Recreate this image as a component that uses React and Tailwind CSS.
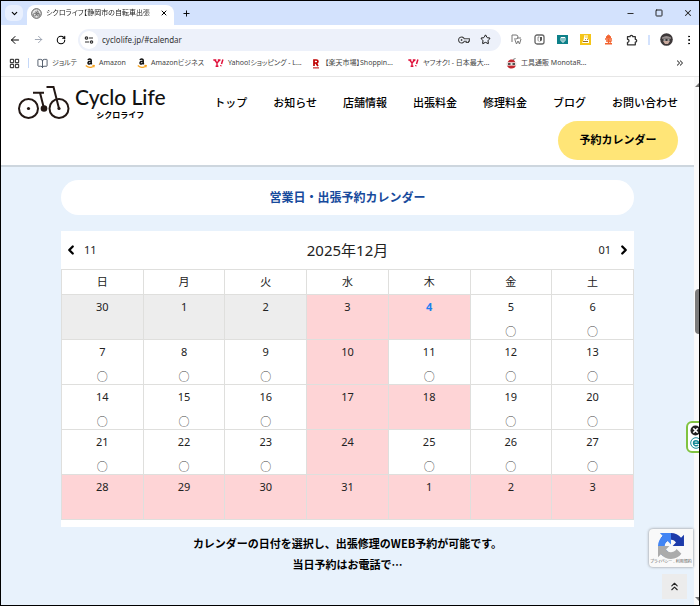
import {
  ArrowLeft, ArrowRight, BookOpen, ChevronDown, ChevronLeft, ChevronRight, ChevronsRight, ChevronsUp,
  LayoutGrid, Minus, MoreVertical, Plus, RotateCw, Square, Star, X,
} from 'lucide-react'

const navItems = ['トップ', 'お知らせ', '店舗情報', '出張料金', '修理料金', 'ブログ', 'お問い合わせ']

const bookmarks = [
  { label: 'ジョルテ', icon: <BookOpen size={11} strokeWidth={2} className="text-gray-600" />, width: 'w-[48px]' },
  { label: 'Amazon', icon: <AmazonIcon />, width: 'w-[52px]' },
  { label: 'Amazonビジネス', icon: <AmazonIcon />, width: 'w-[76px]' },
  { label: 'Yahoo!ショッピング - L...', icon: <YahooIcon />, width: 'w-[98px]' },
  { label: '【楽天市場】Shoppin...', icon: <RakutenIcon />, width: 'w-[97px]' },
  { label: 'ヤフオク! - 日本最大...', icon: <YahooIcon />, width: 'w-[98px]' },
  { label: '工具通販 MonotaR...', icon: <MonotaroIcon />, width: 'w-[92px]' },
]

const weekdays = ['日', '月', '火', '水', '木', '金', '土']

// state: 'past' | 'closed' | 'today' | 'open'
const weeks = [
  [[30, 'past'], [1, 'past'], [2, 'past'], [3, 'closed'], [4, 'today'], [5, 'open'], [6, 'open']],
  [[7, 'open'], [8, 'open'], [9, 'open'], [10, 'closed'], [11, 'open'], [12, 'open'], [13, 'open']],
  [[14, 'open'], [15, 'open'], [16, 'open'], [17, 'closed'], [18, 'closed'], [19, 'open'], [20, 'open']],
  [[21, 'open'], [22, 'open'], [23, 'open'], [24, 'closed'], [25, 'open'], [26, 'open'], [27, 'open']],
  [[28, 'closed'], [29, 'closed'], [30, 'closed'], [31, 'closed'], [1, 'closed'], [2, 'closed'], [3, 'closed']],
]

const cellStyles = {
  past: 'bg-[#ededed]',
  closed: 'bg-[#fed4d6]',
  today: 'bg-[#fed4d6] font-bold text-[#1c80f0]',
  open: 'bg-white',
}

function AmazonIcon() {
  return (
    <svg width="10" height="12" viewBox="0 0 10 12" aria-hidden="true">
      <path d="M3 3.2C3.3 1.8 6.2 1.5 6.2 3.4V6c0 .6.3.9.7 1.2M6.2 4.3C4.2 4.3 3 4.8 3 6c0 1.5 2.5 1.3 3.2-.3" fill="none" stroke="#111" strokeWidth="1.5" />
      <path d="M.8 8.6c2.3 2 5.500 2.200 8 .4M7.400 8.400l1.800.1-.5 1.700" fill="none" stroke="#f7a11a" strokeWidth="1.3" />
    </svg>
  )
}

function YahooIcon() {
  return (
    <svg width="11" height="10" viewBox="0 0 11 10" aria-hidden="true" fill="none" stroke="#e0103a">
      <path d="M.3 2h3M4.8 2h2.700M1.700 2l2.300 3M6.500 2.200L4 5v3.200M2.600 8.200h2.800" strokeWidth="1.4" />
      <path d="M9.900 1.600L8.500 6M8 7.200l-.3 1.100" strokeWidth="1.5" />
    </svg>
  )
}

function RakutenIcon() {
  return (
    <svg width="10" height="11" viewBox="0 0 10 11" aria-hidden="true" fill="none" stroke="#bf0000">
      <path d="M3 8V2h2.300c2.200 0 2.200 3 0 3H3M5 5l2 3" strokeWidth="1.7" />
      <path d="M2 9.900h6" strokeWidth="1" />
    </svg>
  )
}

function MonotaroIcon() {
  return (
    <svg width="11" height="11" viewBox="0 0 11 11" aria-hidden="true">
      <path d="M1.200 7.200h8.600C9.500 9.500 7.800 10.500 5.500 10.500S1.500 9.500 1.200 7.200z" fill="#c3272f" />
      <path d="M1.500 4.500C2.500 2 4 1.500 5.500 1.500s3 .5 4 3z" fill="#c3272f" />
      <path d="M.5 4.500h10v3H.5z" fill="#e8e4e2" />
      <path d="M2 6h2.500M6.500 6H9" stroke="#222" strokeWidth="1.3" />
      <path d="M7 1.500l2.500-1" stroke="#777" fill="none" />
    </svg>
  )
}

function FaviconIcon() {
  return (
    <svg width="11" height="11" viewBox="0 0 11 11" fill="none" stroke="#555" aria-hidden="true">
      <circle cx="5.5" cy="5.5" r="4.8" fill="#e5e5e5" />
      <circle cx="3.7" cy="6.7" r="1.4" strokeWidth=".8" />
      <circle cx="7.3" cy="6.7" r="1.4" strokeWidth=".8" />
      <path d="M4 4h1.500l.3 2.700M5.800 3h1l.5 3.700" strokeWidth=".8" />
    </svg>
  )
}

function SiteInfoIcon() {
  return (
    <svg width="10" height="10" viewBox="0 0 10 10" fill="none" stroke="#333" strokeWidth="1.2" aria-hidden="true">
      <circle cx="2.5" cy="3" r="1.2" />
      <path d="M5 3h4M1 7h4" />
      <circle cx="7.5" cy="7" r="1.2" />
    </svg>
  )
}

function KeyIcon() {
  return (
    <svg width="12" height="8" viewBox="0 0 12 8" fill="none" stroke="#444" strokeWidth="1.1" aria-hidden="true">
      <path d="M6.300 2.800h5.100v2.400h-1v1.300H8.200V5.200H6.300A3 3 0 1 1 6.300 2.800z" />
      <circle cx="3.600" cy="4" r=".9" fill="#444" stroke="none" />
    </svg>
  )
}

function PuzzleIcon() {
  return (
    <svg width="12" height="12" viewBox="0 0 12 12" fill="none" stroke="#333" strokeWidth="1.3" aria-hidden="true">
      <path d="M1.500 2.700H4a1.400 1.400 0 0 1 2.800 0h2.500v2.600a1.400 1.400 0 0 1 0 2.800v2.700H1.500V8.300a1.500 1.500 0 0 0 0-3z" strokeLinejoin="round" />
    </svg>
  )
}

function BikeLogo() {
  return (
    <svg width="53" height="35" viewBox="0 0 53 35" fill="none" stroke="#231815" strokeWidth="2" aria-hidden="true">
      <circle cx="10.500" cy="23.500" r="9.500" />
      <circle cx="41" cy="23.500" r="9.500" />
      <path d="M15 7.800h11M22 7.800l4 15.700M28.500 2h7l5.500 21.500" />
      <circle cx="26" cy="23.500" r="3.300" fill="#231815" stroke="none" />
      <circle cx="10.500" cy="23.500" r="1.600" fill="#231815" stroke="none" />
      <circle cx="41" cy="23.500" r="1.600" fill="#231815" stroke="none" />
    </svg>
  )
}

function RecaptchaLogo() {
  return (
    <svg width="26" height="26" viewBox="0 0 64 64" aria-hidden="true">
      <path d="M64 32c0-.5 0-.9-.1-1.400V4.600l-7.200 7.200C50.800 4.600 42 0 32 0c-10.400 0-19.700 5-25.500 12.800l11.800 12a15.600 15.600 0 0 1 4.800-5.400c2-1.500 4.800-2.800 8.700-2.800.5 0 .8 0 1.100.1 4.800.4 9 3 11.400 6.900L36 32z" fill="#1c3aa9" />
      <path d="M31.900 0H4.600l7.100 7.200C4.600 13.200 0 22 0 32c0 10.400 5 19.700 12.800 25.500l12-11.800a15.600 15.600 0 0 1-5.400-4.800c-1.500-2-2.800-4.800-2.800-8.700 0-.5 0-.8.1-1.100.4-4.800 3-9 6.900-11.400L32 28z" fill="#4285f4" />
      <path d="M0 32v27.400l7.200-7.200C13.200 59.400 22 64 32 64c10.400 0 19.700-5 25.500-12.800l-11.800-12a15.600 15.600 0 0 1-4.800 5.400c-2 1.500-4.800 2.800-8.700 2.800-.5 0-.8 0-1.100-.1-4.800-.4-9-3-11.400-6.900L28 32z" fill="#ababab" />
    </svg>
  )
}

function TitleBar() {
  return (
    <div className="flex h-6 items-center bg-[#d3e2fd] pl-1">
      <button aria-label="タブを検索" className="flex h-4 w-[18px] items-center justify-center rounded-md bg-[#e9f0fe]">
        <ChevronDown size={9} strokeWidth={3} />
      </button>
      <div className="ml-1 mt-1 flex h-5 w-[147px] items-center rounded-t-lg bg-white pl-1 pr-1.5 pb-1">
        <FaviconIcon />
        <span className="ml-1 flex-1 whitespace-nowrap text-[7px] leading-4 text-[#222] mask-r-from-85%">
          シクロライフ【静岡市の自転車出張
        </span>
        <button aria-label="タブを閉じる"><X size={8} strokeWidth={3} /></button>
      </div>
      <button aria-label="新しいタブ" className="ml-2"><Plus size={9} strokeWidth={2.5} /></button>
      <div className="ml-auto flex items-center gap-5 pr-1.5 text-[#222]">
        <button aria-label="最小化"><Minus size={9} strokeWidth={2.5} /></button>
        <button aria-label="最大化"><Square size={8} strokeWidth={3} /></button>
        <button aria-label="閉じる"><X size={10} strokeWidth={2.5} /></button>
      </div>
    </div>
  )
}

function ExtensionIcons() {
  return (
    <>
      <svg width="11" height="11" viewBox="0 0 11 11" fill="none" stroke="#777" aria-hidden="true">
        <path d="M1 8V1h4a2 2 0 0 1 0 4H3" />
        <path d="M4 6l1.500 4L7 7l1.500 3L10 5M6 4h4" />
      </svg>
      <svg width="11" height="11" viewBox="0 0 11 11" fill="none" stroke="#666" aria-hidden="true">
        <rect x="1" y="1" width="9" height="9" rx="2" strokeWidth="1.3" />
        <path d="M6 3h2v2.500c0 1-.8 1.500-2 2z" fill="#555" stroke="none" />
        <path d="M5.500 3H4v3c0 .7.600 1.200 1.500 1.600" strokeWidth=".7" />
      </svg>
      <svg width="11" height="11" viewBox="0 0 11 11" fill="none" aria-hidden="true">
        <path d="M0 1h11v9H0z" fill="#0d8089" />
        <path d="M4 3.500h4v2.500c0 1-.9 1.800-2 2.200-1.100-.4-2-1.200-2-2.200z" stroke="#fff" />
        <path d="M6 4v3.500" stroke="#fff" />
      </svg>
      <svg width="11" height="11" viewBox="0 0 11 11" aria-hidden="true">
        <path d="M0 0h11v11H0z" fill="#f5c518" />
        <path d="M4.500 1h1v3h1V1h1v3.500L9 6v3H2l1.500-3z" fill="#fff" />
        <path d="M3 7.500h5M5 5.500h.8M7 5.500h.8" stroke="#9a6b1c" />
      </svg>
      <svg width="11" height="11" viewBox="0 0 11 11" fill="none" stroke="#f2622e" aria-hidden="true">
        <path d="M3.500 4V2.500L5.500 1l2 1.500V4z" fill="#f2622e" />
        <path d="M2 5h7M3 7h5l-1 1.500M2 9.800h7M5.500 5v4" strokeWidth="1.4" />
      </svg>
    </>
  )
}

function Toolbar() {
  return (
    <div className="flex h-[29px] items-center bg-white pl-2 pr-1">
      <button aria-label="戻る"><ArrowLeft size={12} strokeWidth={2} /></button>
      <button aria-label="進む" className="ml-3 text-gray-400"><ArrowRight size={11} strokeWidth={2} /></button>
      <button aria-label="再読み込み" className="ml-3"><RotateCw size={10} strokeWidth={2.5} /></button>
      <div className="ml-3 flex h-[22px] flex-1 items-center rounded-full bg-[#edf1fa] pl-0.5 pr-2.5">
        <button aria-label="サイト情報" className="flex size-[18px] shrink-0 items-center justify-center rounded-full bg-white"><SiteInfoIcon /></button>
        <input
          aria-label="アドレス"
          defaultValue="cyclolife.jp/#calendar"
          className="ml-1 min-w-0 flex-1 bg-transparent text-[8px] text-[#333] outline-none"
        />
        <button aria-label="パスワード"><KeyIcon /></button>
        <button aria-label="ブックマークに追加" className="ml-2.5"><Star size={11} /></button>
      </div>
      <div className="ml-2.5 flex items-center gap-3">
        <ExtensionIcons />
        <button aria-label="拡張機能"><PuzzleIcon /></button>
      </div>
      <span className="ml-2.5 h-2.5 w-0.5 bg-[#d3e2fd]" />
      <button aria-label="プロフィール" className="ml-2.5">
        <svg width="13" height="13" viewBox="0 0 13 13" aria-hidden="true">
          <circle cx="6.500" cy="6.500" r="6.300" fill="#3d3839" />
          <path d="M2 4.500q4.500-3 9 0v1.200H2z" fill="#978f8e" />
          <path d="M3 8h7l-2 3H5z" fill="#c9a99d" />
          <path d="M3.500 7h2M7.500 7h2" stroke="#fff" />
        </svg>
      </button>
      <button aria-label="メニュー" className="ml-2.5"><MoreVertical size={12} strokeWidth={2} /></button>
    </div>
  )
}

function BookmarkBar() {
  return (
    <div className="flex h-[23px] items-center border-b border-[#e6e6e6] bg-white pb-1 pl-2 pr-3.5 text-[#444]">
      <button aria-label="アプリ"><LayoutGrid size={11} strokeWidth={2.5} /></button>
      <span className="ml-2 mr-2 h-2.5 w-px bg-[#c5d8f8]" />
      {bookmarks.map((b) => (
        <a key={b.label} href="#bookmark" className={`flex shrink-0 items-center gap-1 whitespace-nowrap text-[7px] leading-4 ${b.width}`}>
          <span className="shrink-0">{b.icon}</span>
          {b.label}
        </a>
      ))}
      <button aria-label="他のブックマーク" className="ml-auto"><ChevronsRight size={10} strokeWidth={2.5} /></button>
    </div>
  )
}

function SiteHeader() {
  return (
    <header className="flex h-[90px] items-start justify-between border-b-2 border-[#cdd6de] bg-white pl-[17px] pr-4 pt-2">
      <a href="#top" className="flex items-start gap-1">
        <BikeLogo />
        <span className="flex flex-col items-center">
          <span className="whitespace-nowrap font-['Lato',sans-serif] text-[21px] font-medium leading-6 text-[#111]">Cyclo Life</span>
          <span className="text-[8px] font-bold leading-3">シクロライフ</span>
        </span>
      </a>
      <div className="flex flex-col items-end pt-2">
        <nav className="flex gap-[26px]">
          {navItems.map((item) => (
            <a key={item} href="#nav" className="whitespace-nowrap text-[11px] font-medium leading-5 text-black">{item}</a>
          ))}
        </nav>
        <a href="#calendar" className="mt-2 flex h-[39px] w-[120px] items-center justify-center rounded-full bg-[#ffe577] text-[11px] font-bold text-black">
          予約カレンダー
        </a>
      </div>
    </header>
  )
}

function DayCell({ day, state }) {
  return (
    <td className={`h-[45px] border border-[#dfdfdd] px-0 pb-0 pt-1 align-top ${cellStyles[state]}`}>
      <div className="flex flex-col items-center gap-2.5 leading-4">
        <span>{day}</span>
        {state === 'open' && <a href="#reserve" aria-label={`${day}日を予約`} className="h-3.5 leading-3.5 text-[#444]">○</a>}
      </div>
    </td>
  )
}

function Calendar() {
  return (
    <div className="mt-4 bg-white pb-[7px] text-[#222]">
      <div className="flex h-[38px] items-center justify-between px-[3px]">
        <button className="flex w-16 items-center gap-1.5 text-[11px]">
          <ChevronLeft size={14} strokeWidth={4} className="text-black" />11
        </button>
        <h3 className="text-[15px] leading-6">2025年12月</h3>
        <button className="flex w-16 items-center justify-end gap-1.5 text-[11px]">
          01<ChevronRight size={14} strokeWidth={4} className="text-black" />
        </button>
      </div>
      <table className="w-full table-fixed border-collapse text-center text-[11px]">
        <thead>
          <tr>
            {weekdays.map((d) => (
              <th key={d} className="h-[25px] border border-[#dfdfdd] p-0 font-normal leading-4">{d}</th>
            ))}
          </tr>
        </thead>
        <tbody>
          {weeks.map((week, i) => (
            <tr key={i}>
              {week.map(([day, state]) => <DayCell key={day} day={day} state={state} />)}
            </tr>
          ))}
        </tbody>
      </table>
    </div>
  )
}

function ScrollBar() {
  return (
    <div className="flex w-[5px] flex-col items-end bg-[#fafafa]">
      <svg width="4" height="4" viewBox="0 0 4 4" className="mt-1.5" aria-hidden="true"><path d="M0 4l4-4v4z" fill="#777" /></svg>
      <div className="mt-[202px] h-[45px] w-1 rounded-l-sm bg-[#7c7c7c]" />
      <svg width="4" height="4" viewBox="0 0 4 4" className="mb-1 mt-auto" aria-hidden="true"><path d="M0 0h4v4z" fill="#777" /></svg>
    </div>
  )
}

export default function App() {
  return (
    <div className="relative flex min-h-screen flex-col overflow-hidden border border-black bg-white font-['Noto_Sans','Noto_Sans_CJK_JP',sans-serif]">
      <div className="[font-feature-settings:'palt']">
        <TitleBar />
        <Toolbar />
        <BookmarkBar />
      </div>
      <div className="flex flex-1">
        <div className="flex min-w-0 flex-1 flex-col bg-[#e8f2fc]">
          <SiteHeader />
          <main className="px-[60px] pt-[13px]">
            <h2 className="flex h-[35px] items-center justify-center rounded-full bg-white text-[12px] font-bold text-[#174a9c]">
              営業日・出張予約カレンダー
            </h2>
            <Calendar />
            <p className="mt-1.5 text-center font-['Noto_Sans_CJK_JP',sans-serif] text-[11px] font-bold leading-[21px] text-black">
              カレンダーの日付を選択し、出張修理のWEB予約が可能です。<br />当日予約はお電話で⋯
            </p>
          </main>
        </div>
        <ScrollBar />
      </div>

      {/* Floating widgets */}
      <div className="absolute -right-[9px] top-[420px] flex h-8 w-[22px] flex-col justify-between rounded-md border-2 border-[#80c341] bg-white py-0.5 pl-0.5">
        <svg width="11" height="11" viewBox="0 0 11 11" aria-hidden="true">
          <circle cx="5.500" cy="5.500" r="5" fill="#222" />
          <path d="M3.300 3.300l4.400 4.400M7.700 3.300L3.300 7.700" stroke="#fff" strokeWidth="1.6" />
        </svg>
        <svg width="12" height="12" viewBox="0 0 12 12" fill="none" stroke="#168a98" aria-hidden="true">
          <circle cx="6" cy="6" r="5.300" />
          <path d="M3.500 6.200h5C8.500 2.800 3.500 2.800 3.500 6.200c0 3 3.500 3.200 4.600 1.600" strokeWidth="1.5" />
        </svg>
      </div>
      <div className="absolute bottom-[38px] right-1.5 flex h-[38px] w-11 flex-col items-center rounded-l-sm bg-[#f9f9f9] pt-1 shadow-[0_0_3px_#888]">
        <RecaptchaLogo />
        <span className="whitespace-nowrap text-[4px] leading-[6px] text-[#555] [font-feature-settings:'palt']">プライバシー - 利用規約</span>
      </div>
      <button aria-label="ページの先頭へ" className="absolute bottom-1.5 right-3 flex size-[25px] items-center justify-center bg-[#ececec] text-[#222]">
        <ChevronsUp size={13} strokeWidth={2} />
      </button>
    </div>
  )
}
